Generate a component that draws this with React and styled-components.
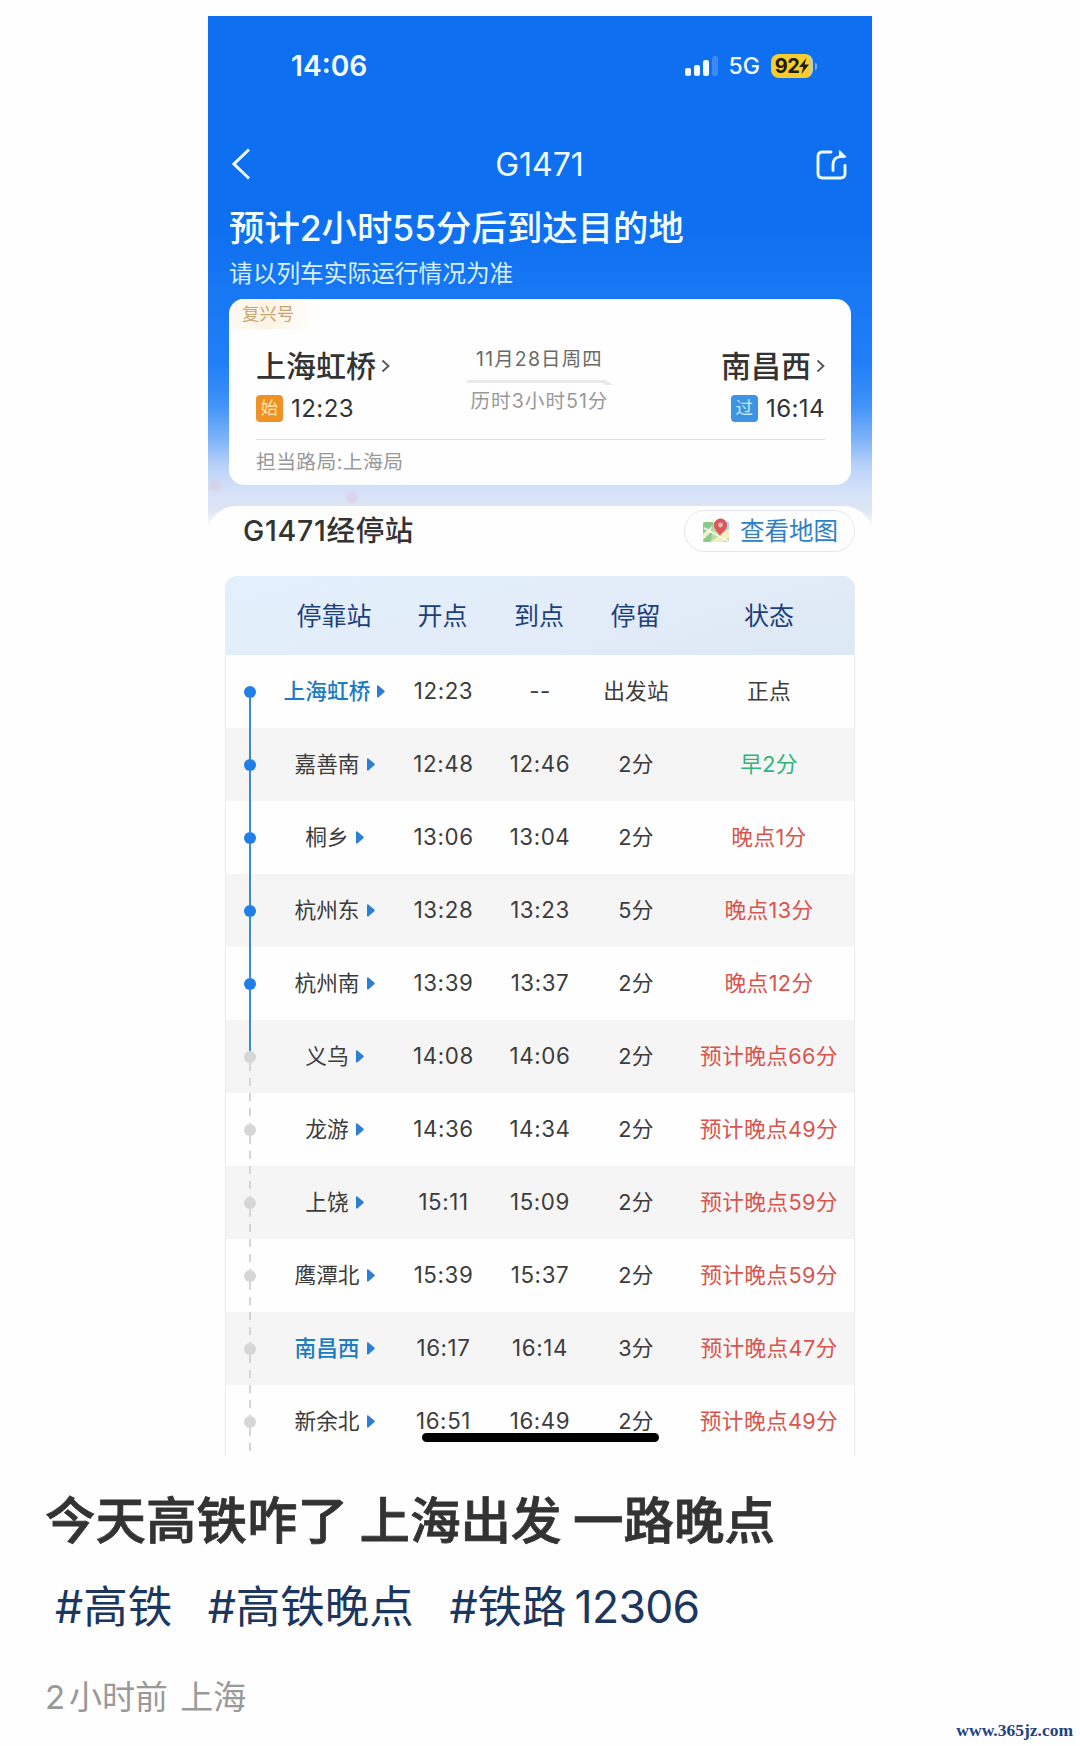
import React from "react";
import styled, { createGlobalStyle, css } from "styled-components";

const Global = createGlobalStyle`
  *, *::before, *::after { box-sizing: border-box; }
  body {
    margin: 0;
    background: #fefefe;
    font-family: Inter, "Noto Sans CJK SC", sans-serif;
    color: #333;
  }
`;

const Page = styled.main`
  position: relative;
  width: 1080px;
  height: 1746px;
  padding-top: 16px;
  overflow: hidden;
`;

const Phone = styled.section`
  position: relative;
  width: 664px;
  height: 1440px;
  margin-left: 208px;
  overflow: hidden;
  background: #fff;
`;

const Hero = styled.header`
  height: 515px;
  padding: 0 21px;
  background: radial-gradient(circle at 7px 470px, #e9b9cf55 0 3px, transparent 8px),
    radial-gradient(circle at 144px 481px, #e3b4d055 0 3px, transparent 8px),
    linear-gradient(
      #0e6ff0 0,
      #0e6ff0 215px,
      #1878f4 280px,
      #1f7ef7 345px,
      #4093f8 390px,
      #82b5f8 425px,
      #b9d2f9 450px,
      #d2e0f8 472px,
      #dfe6f4 495px,
      #fff 513px
    );
`;

const StatusBar = styled.div`
  display: flex;
  align-items: center;
  height: 100px;
  padding: 0 34px 0 62px;
  color: #f4fbff;
`;

const Clock = styled.span`
  font-size: 28.2px;
  font-weight: 600;
  line-height: 36px;
  margin-right: auto;
`;

const Signal = styled.svg`
  width: 34px;
  height: 22px;
  margin-right: 10px;
`;

const Network = styled.span`
  font-size: 23px;
  font-weight: 500;
  line-height: 30px;
  margin-right: 11px;
`;

const Battery = styled.span`
  display: flex;
  align-items: center;
  justify-content: center;
  width: 42px;
  height: 24px;
  border-radius: 8px;
  background: linear-gradient(90deg, #f5cd2c 92%, #c9cfa0 92%);
  color: #221b05;
  font-size: 20px;
  font-weight: 700;
  letter-spacing: -0.5px;
`;

const BatteryCap = styled.span`
  width: 2px;
  height: 7px;
  margin-left: 2px;
  border-radius: 0 2px 2px 0;
  background: #7fb0e8;
`;

const NavBar = styled.div`
  display: flex;
  align-items: center;
  justify-content: space-between;
  height: 62px;
  margin-top: 17px;
  padding: 0 4px 0 3px;
  color: #eefaff;
`;

const NavTitle = styled.h1`
  margin: 0;
  padding: 1px 0 0 13px;
  font-size: 32px;
  font-weight: 400;
  line-height: 40px;
`;

const Eta = styled.h2`
  margin: 11px 0 0;
  font-size: 35.4px;
  font-weight: 500;
  line-height: 46px;
  color: #f2fdff;
  white-space: nowrap;
`;

const EtaNote = styled.p`
  margin: 6px 0 0;
  font-size: 23.7px;
  line-height: 32px;
  color: #d9f0ff;
`;

const Card = styled.div`
  height: 186px;
  margin-top: 9px;
  border-radius: 15px;
  background: #fefefe;
  overflow: hidden;
`;

const Tag = styled.div`
  width: 80px;
  height: 30px;
  padding-left: 13px;
  font-size: 17.4px;
  line-height: 29px;
  color: #c7a46f;
  background: linear-gradient(90deg, #fefaf2, #fdf3e3 50%, #fefdfb);
`;

const Journey = styled.div`
  display: flex;
  justify-content: space-between;
  height: 111px;
  margin: 0 26px 0 27px;
  padding-top: 16px;
  border-bottom: 1px solid #dedede;
`;

const Endpoint = styled.div`
  display: flex;
  flex-direction: column;
  align-items: ${(p) => (p.$right ? "flex-end" : "flex-start")};
  width: 140px;
`;

const StationName = styled.div`
  display: flex;
  align-items: center;
  gap: 5px;
  height: 42px;
  font-size: 30px;
  font-weight: 500;
  line-height: 38px;
  white-space: nowrap;
`;

const NameText = styled.span`
  padding-bottom: 1px;
`;

const EndTime = styled.div`
  display: flex;
  align-items: center;
  gap: 8px;
  height: 42px;
  font-size: 24.1px;
  letter-spacing: 0.4px;
`;

const Badge = styled.span`
  width: 27px;
  height: 27px;
  border-radius: 4px;
  background: ${(p) => p.$bg};
  color: ${(p) => p.$fg};
  font-size: 17.5px;
  line-height: 26px;
  text-align: center;
`;

const Middle = styled.div`
  display: flex;
  flex-direction: column;
  align-items: center;
  width: 150px;
  padding-right: 2px;
  white-space: nowrap;
`;

const TripDate = styled.span`
  font-size: 19.4px;
  line-height: 28px;
  letter-spacing: 1.2px;
  color: #6a6a6a;
`;

const TripArrow = styled.svg`
  width: 146px;
  height: 8px;
  margin: 4px 0 2px;
`;

const Duration = styled.span`
  font-size: 19.6px;
  line-height: 28px;
  letter-spacing: 1px;
  color: #999;
`;

const Bureau = styled.p`
  margin: 7px 0 0 27px;
  font-size: 19.8px;
  line-height: 30px;
  letter-spacing: 0.4px;
  color: #999;
`;

const Sheet = styled.div`
  margin-top: -25px;
  padding: 3px 17px 0;
  border-radius: 28px 28px 0 0;
  background: #fefefe;
`;

const SheetHead = styled.div`
  display: flex;
  align-items: center;
  justify-content: space-between;
  height: 43px;
  padding-left: 18px;
`;

const SheetTitle = styled.h3`
  margin: 0;
  padding-top: 1px;
  font-size: 28.5px;
  font-weight: 500;
  line-height: 40px;
  letter-spacing: 0.7px;
`;

const MapButton = styled.button`
  display: flex;
  align-items: center;
  gap: 10px;
  width: 171px;
  height: 42px;
  padding: 0 0 0 17px;
  border: 1.5px solid #e3e8ec;
  border-radius: 21px;
  background: #fefefe;
  color: #2f80c6;
  font: inherit;
  font-size: 24.5px;
  line-height: 38px;
  white-space: nowrap;
`;

const Table = styled.div`
  margin-top: 24px;
  border: 1px solid #e9ecee;
  border-top: 0;
  border-radius: 12px 12px 0 0;
  overflow: hidden;
`;

const columns = css`
  display: grid;
  grid-template-columns: 48px 120px 97px 96px 97px 170px;
  align-items: center;
  justify-items: center;
`;

const HeadRow = styled.div`
  ${columns}
  height: 79px;
  padding-bottom: 3px;
  background: linear-gradient(165deg, #e2effc, #e3edf9 50%, #dde8f5);
  color: #1d3f7c;
  font-size: 25px;
`;

const Row = styled.div`
  ${columns}
  height: 73px;
  background: ${(p) => (p.$shaded ? "#f5f5f5" : "#fefefe")};
  font-size: 21.7px;
  line-height: 32px;
  color: #3c3c3c;
  white-space: nowrap;
`;

const Track = styled.div`
  display: flex;
  flex-direction: column;
  align-items: center;
  align-self: stretch;
`;

const solidLine = "#3c8bc6";
const dashLine = "repeating-linear-gradient(#d5d5d5 0 8px, transparent 8px 15px)";
const lineFill = { solid: solidLine, dash: dashLine, none: "transparent" };

const Segment = styled.span`
  flex: 1;
  width: 2px;
  background: ${(p) => lineFill[p.$kind]};
`;

const Dot = styled.span`
  width: 12px;
  height: 12px;
  border-radius: 50%;
  background: ${(p) => (p.$passed ? "#1f7fe6" : "#d6d6d6")};
`;

const Station = styled.span`
  display: flex;
  align-items: center;
  gap: 7px;
  padding: 0 0 1px 1px;
  font-weight: ${(p) => (p.$active ? 500 : 400)};
  color: ${(p) => (p.$active ? "#1b7cc2" : "inherit")};
`;

const StationLabel = styled.span`
  padding-bottom: 1px;
`;

const Time = styled.span`
  padding: 0 0 1px 2px;
  font-size: 22.3px;
  letter-spacing: 0.6px;
`;

const Stay = styled.span`
  padding: 0 0 1px 1px;
  letter-spacing: 0.2px;
`;

const statusColor = { late: "#d9544d", early: "#2fb57c", normal: "inherit" };

const Status = styled.span`
  padding-bottom: 1px;
  letter-spacing: 0.35px;
  color: ${(p) => statusColor[p.$tone]};
`;

const HomeBar = styled.div`
  position: absolute;
  left: 214px;
  bottom: 14px;
  width: 237px;
  height: 9px;
  border-radius: 5px;
  background: #000;
`;

const Caption = styled.article`
  padding: 32px 45px 0;
`;

const PostTitle = styled.h2`
  margin: 0;
  font-size: 50.5px;
  font-weight: 500;
  line-height: 66px;
  word-spacing: -2px;
  white-space: nowrap;
  -webkit-text-stroke: 0.8px #333;
`;

const Tags = styled.div`
  display: flex;
  gap: 35.5px;
  margin-top: 23px;
  padding-left: 10px;
  font-size: 44.5px;
  line-height: 60px;
  word-spacing: -4.5px;
  color: #1b365f;
  white-space: nowrap;
`;

const TagNumber = styled.span`
  letter-spacing: -0.7px;
`;

const Meta = styled.p`
  margin: 38px 0 0;
  font-size: 33px;
  line-height: 44px;
  word-spacing: 3px;
  color: #999;
`;

const Age = styled.span`
  word-spacing: -5.5px;
`;

const Watermark = styled.span`
  position: absolute;
  right: 7px;
  bottom: 4px;
  font-family: "Liberation Serif", serif;
  font-size: 17.5px;
  font-weight: 700;
  line-height: 24px;
  color: #1d4482;
`;

const Chevron = () => (
  <svg width="9" height="14" viewBox="0 0 9 14" fill="none" stroke="#555" strokeWidth="1.8">
    <path d="M1.5 1.5 7.5 7l-6 5.5" />
  </svg>
);

const Play = () => (
  <svg width="8" height="13" viewBox="0 0 8 13" fill="#2c7fd4">
    <path d="M0 1.2C0 .2 1 .1 1.6.7l5.7 4.9c.6.5.6 1.2 0 1.7l-5.7 5c-.6.5-1.6.3-1.6-.6z" />
  </svg>
);

const BackIcon = () => (
  <svg width="18" height="32" viewBox="0 0 18 32" fill="none" stroke="currentColor" strokeWidth="3">
    <path d="M17 1.5 2 16l15 14.5" />
  </svg>
);

const ShareIcon = () => (
  <svg width="31" height="31" viewBox="0 0 31 31" fill="none" stroke="currentColor" strokeWidth="2.9" strokeLinecap="round">
    <path d="M15 3H6.500Q2 3 2 7.500v17Q2 29 6.500 29h18q4.500 0 4.500-4.500V16.500" />
    <path d="M17 21.500v-5.500Q17 8.200 24.500 7.600h3" />
    <path d="M23.500 1.800 29.800 7.900h-6.300z" fill="currentColor" strokeWidth="1.200" strokeLinejoin="round" />
  </svg>
);

const MapIcon = () => (
  <svg width="28" height="27" viewBox="0 0 28 27">
    <rect x="1" y="5" width="26" height="20" rx="2" fill="#b9dc9f" />
    <path d="M1 7q0-2 2-2h8l-2 20H3q-2 0-2-2z" fill="#8cc98e" />
    <path d="M9 15 1 23v-6l9-8z" fill="#f3eecb" />
    <path d="M8 25 27 12v8l-6 5z" fill="#f6edc4" />
    <path d="m17 5 10 0v6l-8 6-7-5z" fill="#a9d3e6" />
    <path d="M2 11l24 13" stroke="#f8fbf2" strokeWidth="1.6" />
    <path d="M18 19c-2-4-6-6-6-11a6.500 6.500 0 0 1 13 0c0 5-5 7-7 11z" fill="#de5459" />
    <circle cx="18.500" cy="8" r="2.400" fill="#f3b9b7" />
  </svg>
);

const stops = [
  ["上海虹桥", "12:23", "--", "出发站", "正点", "normal", true],
  ["嘉善南", "12:48", "12:46", "2分", "早2分", "early"],
  ["桐乡", "13:06", "13:04", "2分", "晚点1分", "late"],
  ["杭州东", "13:28", "13:23", "5分", "晚点13分", "late"],
  ["杭州南", "13:39", "13:37", "2分", "晚点12分", "late"],
  ["义乌", "14:08", "14:06", "2分", "预计晚点66分", "late"],
  ["龙游", "14:36", "14:34", "2分", "预计晚点49分", "late"],
  ["上饶", "15:11", "15:09", "2分", "预计晚点59分", "late"],
  ["鹰潭北", "15:39", "15:37", "2分", "预计晚点59分", "late"],
  ["南昌西", "16:17", "16:14", "3分", "预计晚点47分", "late", true],
  ["新余北", "16:51", "16:49", "2分", "预计晚点49分", "late"],
];
const lastPassed = 4;

function StopRow({ stop, index }) {
  const [name, depart, arrive, stay, status, tone, active] = stop;
  const above = index === 0 ? "none" : index <= lastPassed + 1 ? "solid" : "dash";
  return (
    <Row $shaded={index % 2 === 1}>
      <Track>
        <Segment $kind={above} />
        <Dot $passed={index <= lastPassed} />
        <Segment $kind={index <= lastPassed ? "solid" : "dash"} />
      </Track>
      <Station $active={active}>
        <StationLabel>{name}</StationLabel>
        <Play />
      </Station>
      <Time>{depart}</Time>
      <Time>{arrive}</Time>
      <Stay>{stay}</Stay>
      <Status $tone={tone}>{status}</Status>
    </Row>
  );
}

export default function App() {
  return (
    <Page>
      <Global />
      <Phone>
        <Hero>
          <StatusBar>
            <Clock>14:06</Clock>
            <Signal viewBox="0 0 34 22" fill="#f4fbff">
              <rect x="0" y="13" width="6" height="8" rx="2" />
              <rect x="9" y="10" width="6" height="11" rx="2" />
              <rect x="18" y="5" width="6" height="16" rx="2" />
              <rect x="27" y="1" width="6" height="20" rx="2" fill="#3a8bf5" />
            </Signal>
            <Network>5G</Network>
            <Battery>
              92
              <svg width="10" height="16" viewBox="0 0 10 16" fill="#221b05">
                <path d="M7.500 0 0 9h4.300L2.500 16 10 6.500H5.500z" />
              </svg>
            </Battery>
            <BatteryCap />
          </StatusBar>
          <NavBar>
            <BackIcon />
            <NavTitle>G1471</NavTitle>
            <ShareIcon />
          </NavBar>
          <Eta>预计2小时55分后到达目的地</Eta>
          <EtaNote>请以列车实际运行情况为准</EtaNote>
          <Card>
            <Tag>复兴号</Tag>
            <Journey>
              <Endpoint>
                <StationName>
                  <NameText>上海虹桥</NameText>
                  <Chevron />
                </StationName>
                <EndTime>
                  <Badge $bg="#ee9226" $fg="#ffe3b0">始</Badge>
                  12:23
                </EndTime>
              </Endpoint>
              <Middle>
                <TripDate>11月28日周四</TripDate>
                <TripArrow viewBox="0 0 146 8">
                  <path d="M0 3h138l-4-3 12 8h-8l-3-2H0z" fill="#e9e9e9" />
                </TripArrow>
                <Duration>历时3小时51分</Duration>
              </Middle>
              <Endpoint $right>
                <StationName>
                  <NameText>南昌西</NameText>
                  <Chevron />
                </StationName>
                <EndTime>
                  <Badge $bg="#3d94e3" $fg="#c9ebff">过</Badge>
                  16:14
                </EndTime>
              </Endpoint>
            </Journey>
            <Bureau>担当路局:上海局</Bureau>
          </Card>
        </Hero>
        <Sheet>
          <SheetHead>
            <SheetTitle>G1471经停站</SheetTitle>
            <MapButton>
              <MapIcon />
              查看地图
            </MapButton>
          </SheetHead>
          <Table>
            <HeadRow>
              <span />
              <span>停靠站</span>
              <span>开点</span>
              <span>到点</span>
              <span>停留</span>
              <span>状态</span>
            </HeadRow>
            {stops.map((stop, i) => (
              <StopRow key={stop[0]} stop={stop} index={i} />
            ))}
          </Table>
        </Sheet>
        <HomeBar />
      </Phone>
      <Caption>
        <PostTitle>今天高铁咋了 上海出发 一路晚点</PostTitle>
        <Tags>
          <span>#高铁</span>
          <span>#高铁晚点</span>
          <span>
            #铁路 <TagNumber>12306</TagNumber>
          </span>
        </Tags>
        <Meta>
          <Age>2 小时前</Age> 上海
        </Meta>
      </Caption>
      <Watermark>www.365jz.com</Watermark>
    </Page>
  );
}
